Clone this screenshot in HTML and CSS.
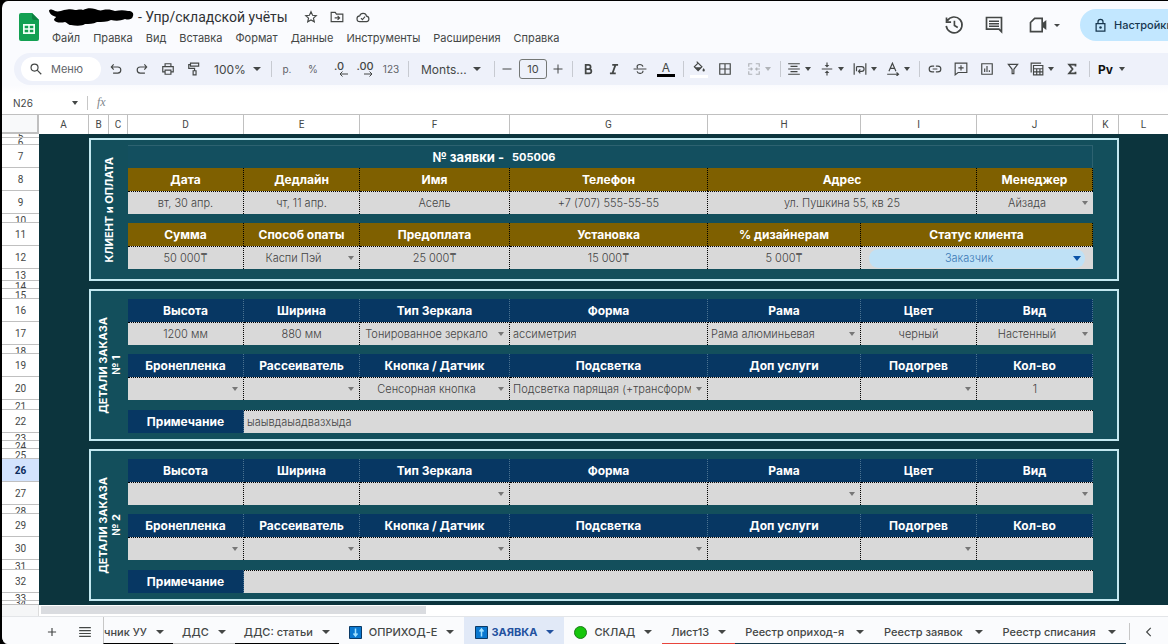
FILE: index.html
```html
<!DOCTYPE html>
<html lang="ru">
<head>
<meta charset="utf-8">
<title>Упр/складской учёты</title>
<link rel="stylesheet" href="styles.css">
</head>
<body>
<div class="app">
  <header class="top">
    <svg class="logo" viewBox="0 0 20 28"><path d="M2 0h11l7 7v19a2 2 0 0 1-2 2H2a2 2 0 0 1-2-2V2a2 2 0 0 1 2-2z" fill="#13a052"/><path d="M13 0l7 7h-5a2 2 0 0 1-2-2z" fill="#0c8040"/><path d="M4 11h12v10H4zM5.700 12.700v2.500h3.500v-2.500zM10.800 12.700v2.500h3.500v-2.500zM5.700 16.800v2.500h3.500v-2.500zM10.800 16.800v2.500h3.500v-2.500z" fill="#f2fff6" fill-rule="evenodd"/></svg>
    <div class="heading">
      <div class="title-row">
        <svg class="scribble" viewBox="0 0 86 18"><path d="M1 3c0-2 3-2 6 0 3 1 6 0 9-1 5-1 8-1 11 0 3 0 5-1 8 0 4-2 8-2 12-1 3 1 5 2 8 1 5-1 9 0 12 1 5-1 9-1 13 0 4 0 6 2 5 5-1 4-5 4-8 3-5 2-9 2-14 1-4 2-9 2-14 2-4 2-8 2-12 2-2 2-9 2-14 1-3 0-3-2-6-3-4 1-9 1-11-2 0-2 2-2 2-3-2-1-6-2-7-6z" fill="#000"/></svg>
        <h1 class="title">- Упр/складской учёты</h1>
        <button class="mini" aria-label="Пометить"><svg viewBox="0 0 24 24"><path d="M12 3l2.700 6 6.300.6-4.800 4.300 1.500 6.300L12 17l-5.700 3.200 1.500-6.300L3 9.600 9.300 9z" class="ln"/></svg></button>
        <button class="mini" aria-label="Переместить"><svg viewBox="0 0 24 24"><path d="M2 4h7l2 3h11v13H2zM8 13.500h8M13 10l3.500 3.500L13 17" class="ln"/></svg></button>
        <button class="mini" aria-label="Статус документа"><svg viewBox="0 0 24 24"><path d="M7 20a5 5 0 0 1-.6-10A6 6 0 0 1 18 10.500 4.800 4.800 0 0 1 18 20zM8.500 14l2.500 2.500 4.500-5" class="ln"/></svg></button>
      </div>
      <nav class="menu">
        <button>Файл</button><button>Правка</button><button>Вид</button><button>Вставка</button><button>Формат</button><button>Данные</button><button>Инструменты</button><button>Расширения</button><button>Справка</button>
      </nav>
    </div>
    <div class="actions">
      <button class="act" aria-label="История"><svg viewBox="0 0 24 24"><path d="M4 7a9.500 9.500 0 1 1-1.300 6M3 3v5.500h5.500M12.500 7v5.500l4 2.500" class="ln"/></svg></button>
      <button class="act" aria-label="Комментарии"><svg viewBox="0 0 24 24"><path d="M3 3h18v17l-3-3H3zM6 7.500h12M6 10.500h12M6 13.500h12" class="ln"/></svg></button>
      <button class="act call" aria-label="Видеовстреча"><svg viewBox="0 0 24 24"><path d="M8 4h9v16H3V9z" class="ln"/><path d="M17 10l5-4v12l-5-4z"/></svg><i class="caret"></i></button>
      <button class="share"><svg viewBox="0 0 24 24"><path d="M5 9h14v12H5zM8 9V6a4 4 0 0 1 8 0v3" class="ln"/><circle cx="12" cy="15" r="2"/></svg>Настройки доступа</button>
    </div>
  </header>

  <div class="toolbar">
    <label class="search"><svg viewBox="0 0 24 24"><circle cx="9.500" cy="9.500" r="6" class="ln"/><path d="M14 14l7 7" class="ln"/></svg><input type="text" placeholder="Меню" aria-label="Меню"></label>
    <button class="tb" aria-label="Отменить"><svg viewBox="0 0 24 24"><path d="M8 4L4 8.500 8 13M4.500 8.500H15a5 5 0 0 1 0 10.500H7" class="ln"/></svg></button>
    <button class="tb" aria-label="Повторить"><svg viewBox="0 0 24 24"><path d="M16 4l4 4.500L16 13M19.500 8.500H9A5 5 0 0 0 9 19h8" class="ln"/></svg></button>
    <button class="tb" aria-label="Печать"><svg viewBox="0 0 24 24"><path d="M7 8V3h10v5M7 17H3V8h18v9h-4M7 14h10v7H7z" class="ln"/></svg></button>
    <button class="tb" aria-label="Копировать форматирование"><svg viewBox="0 0 24 24"><path d="M6 2h14v5H6zM6 4.500H3V11h10v4M10.500 15h5v7h-5z" class="ln"/></svg></button>
    <button class="pick zoom">100%<i class="caret"></i></button>
    <i class="sep"></i>
    <button class="tb txt">р.</button>
    <button class="tb txt">%</button>
    <button class="tb dec">.0<svg viewBox="0 0 10 6"><path d="M10 3H2M4.500.5L2 3l2.500 2.500" class="ln1"/></svg></button>
    <button class="tb dec">.00<svg viewBox="0 0 10 6"><path d="M0 3h8M5.500.5L8 3 5.500 5.500" class="ln1"/></svg></button>
    <button class="tb num">123</button>
    <i class="sep"></i>
    <button class="pick font">Monts...<i class="caret"></i></button>
    <i class="sep"></i>
    <button class="step" aria-label="Меньше"><svg viewBox="0 0 24 24"><path d="M3 12h18" class="ln"/></svg></button>
    <input class="size" type="text" value="10" aria-label="Размер шрифта">
    <button class="step" aria-label="Больше"><svg viewBox="0 0 24 24"><path d="M3 12h18M12 3v18" class="ln"/></svg></button>
    <i class="sep"></i>
    <button class="tb" aria-label="Полужирный"><svg viewBox="0 0 24 24"><path d="M8 5h5a3.400 3.400 0 0 1 0 7H8zM8 12h6a3.600 3.600 0 0 1 0 7.500H8z" class="ln bold"/></svg></button>
    <button class="tb" aria-label="Курсив"><svg viewBox="0 0 24 24"><path d="M9 5h10M5 19.500h10M14.500 5l-5 14" class="ln bold"/></svg></button>
    <button class="tb" aria-label="Зачёркнутый"><svg viewBox="0 0 24 24"><path d="M1 12h22M17 8c-1-5-10-5-10 0 0 1.500.5 2 1 2.500M7 16c1 5 11 4.500 10-1" class="ln"/></svg></button>
    <button class="tb color">A<i class="bar"></i></button>
    <i class="sep"></i>
    <button class="tb fill" aria-label="Цвет заливки"><svg viewBox="0 0 24 24"><path d="M8 1l9 9-6.500 6.500L4 10l6-6" class="ln"/><path d="M4.500 10.500h12l-6 6zM20 12c-1 1.500-2 3-2 4a2 2 0 0 0 4 0c0-1-1-2.500-2-4z"/></svg><i class="bar"></i></button>
    <button class="tb" aria-label="Границы"><svg viewBox="0 0 24 24"><path d="M3 3h18v18H3zM3 12h18M12 3v18" class="ln"/></svg></button>
    <button class="pick merge" aria-label="Объединить" disabled><svg viewBox="0 0 24 24"><path d="M9 3H3v5M15 3h6v5M9 21H3v-5M15 21h6v-5M2 12h7M6.500 9.500L9 12l-2.500 2.500M22 12h-7M17.500 9.500L15 12l2.500 2.500" class="ln"/></svg><i class="caret"></i></button>
    <i class="sep"></i>
    <button class="pick" aria-label="По горизонтали"><svg viewBox="0 0 24 24"><path d="M2 3h20M6 7.500h12M2 12h20M6 16.500h12M2 21h20" class="ln"/></svg><i class="caret"></i></button>
    <button class="pick" aria-label="По вертикали"><svg viewBox="0 0 24 24"><path d="M3 12h18M12 1v6M12 23v-6" class="ln"/><path d="M8 5h8l-4 4.500zM8 19h8l-4-4.500z"/></svg><i class="caret"></i></button>
    <button class="pick" aria-label="Перенос"><svg viewBox="0 0 24 24"><path d="M2 2v20M22 2v20M6 8h9a3.500 3.500 0 0 1 0 8h-5M12.500 12.500L9.500 16l3 3.500M6 8v8" class="ln"/></svg><i class="caret"></i></button>
    <button class="pick" aria-label="Поворот"><svg viewBox="0 0 24 24"><path d="M5 16l6-14 6 14M7 11h8M2 21h19M18 18l3.500 3-3.500 3" class="ln"/></svg><i class="caret"></i></button>
    <i class="sep"></i>
    <button class="tb" aria-label="Ссылка"><svg viewBox="0 0 24 24"><path d="M10.500 7H7a5 5 0 0 0 0 10h3.500M13.500 7H17a5 5 0 0 1 0 10h-3.500M8 12h8" class="ln"/></svg></button>
    <button class="tb" aria-label="Комментарий"><svg viewBox="0 0 24 24"><path d="M2 2h20v16H7l-5 4zM7.500 10h9M12 5.500v9" class="ln"/></svg></button>
    <button class="tb" aria-label="Диаграмма"><svg viewBox="0 0 24 24"><path d="M3 3h18v18H3zM8 17v-6M12 17V7M16 17v-3" class="ln"/></svg></button>
    <button class="tb" aria-label="Фильтр"><svg viewBox="0 0 24 24"><path d="M4 4h16l-6.500 8.500V20h-3v-7.500z" class="ln"/></svg></button>
    <button class="pick" aria-label="Таблица"><svg viewBox="0 0 24 24"><path d="M6 6h16v16H6zM6 11.500h16M6 17h16M11.500 11.500V22M17 11.500V22M2 18V2h17" class="ln"/></svg><i class="caret"></i></button>
    <button class="tb" aria-label="Функции"><svg viewBox="0 0 24 24"><path d="M18 7.500V4.500H7l6 7.500-6 7.500h11v-3" class="ln bold"/></svg></button>
    <i class="sep"></i>
    <button class="pick lang">Pv<i class="caret"></i></button>
  </div>

  <div class="formula">
    <button class="name">N26<i class="caret"></i></button>
    <i class="rule"></i>
    <span class="fx">fx</span>
    <input class="expr" type="text" aria-label="Формула">
  </div>

  <div class="sheet">
  <table class="grid">
    <colgroup><col class="c-n"><col class="c-a"><col class="c-b"><col class="c-c"><col class="c-m"><col class="c-m"><col class="c-f"><col class="c-g"><col class="c-h"><col class="c-m"><col class="c-m"><col class="c-k"><col class="c-l"></colgroup>
    <thead>
      <tr><td class="corner"></td><th>A</th><th>B</th><th>C</th><th>D</th><th>E</th><th>F</th><th>G</th><th>H</th><th>I</th><th>J</th><th>K</th><th class="l">L</th></tr>
    </thead>
    <tbody>
      <tr class="h4"><th class="n"><span>5</span></th><td rowspan="30"></td><td colspan="10"></td><td rowspan="30"></td></tr>
      <tr class="h7"><th class="n"><span>6</span></th><th class="side" colspan="2" rowspan="8"><span>КЛИЕНТ и ОПЛАТА</span></th><td class="gap first" colspan="7"></td><td class="edge" rowspan="8"></td></tr>
      <tr class="h23"><th class="n"><span>7</span></th><td class="order" colspan="3">№ заявки -</td><td class="code" colspan="4">505006</td></tr>
      <tr class="h23 gold"><th class="n"><span>8</span></th><th>Дата</th><th>Дедлайн</th><th>Имя</th><th>Телефон</th><th colspan="2">Адрес</th><th id="mgr">Менеджер</th></tr>
      <tr class="h23 vals"><th class="n"><span>9</span></th><td>вт, 30 апр.</td><td>чт, 11 апр.</td><td>Асель</td><td>+7 (707) 555-55-55</td><td colspan="2">ул. Пушкина 55, кв 25</td><td class="dd"><select aria-labelledby="mgr"><option>Айзада</option></select></td></tr>
      <tr class="h9"><th class="n"><span>10</span></th><td class="gap" colspan="7"></td></tr>
      <tr class="h23 gold"><th class="n"><span>11</span></th><th>Сумма</th><th id="pay">Способ опаты</th><th>Предоплата</th><th>Установка</th><th>% дизайнерам</th><th id="status" colspan="2">Статус клиента</th></tr>
      <tr class="h23 vals"><th class="n"><span>12</span></th><td>50 000₸</td><td class="dd"><select aria-labelledby="pay"><option>Каспи Пэй</option></select></td><td>25 000₸</td><td>15 000₸</td><td>5 000₸</td><td class="dd chip" colspan="2"><select aria-labelledby="status"><option>Заказчик</option></select></td></tr>
      <tr class="h12"><th class="n"><span>13</span></th><td class="gap last" colspan="7"></td></tr>
      <tr class="h8"><th class="n"><span>14</span></th><td colspan="10"></td></tr>

      <tr class="h10"><th class="n"><span>15</span></th><th class="side" colspan="2" rowspan="9"><span>ДЕТАЛИ ЗАКАЗА<br>№ 1</span></th><td class="gap first" colspan="7"></td><td class="edge" rowspan="9"></td></tr>
      <tr class="h23 blue"><th class="n"><span>16</span></th><th>Высота</th><th>Ширина</th><th id="type1">Тип Зеркала</th><th>Форма</th><th id="frame1">Рама</th><th>Цвет</th><th id="view1">Вид</th></tr>
      <tr class="h23 vals"><th class="n"><span>17</span></th><td>1200 мм</td><td>880 мм</td><td class="dd"><select aria-labelledby="type1"><option>Тонированное зеркало</option></select></td><td class="left">ассиметрия</td><td class="dd left"><select aria-labelledby="frame1"><option>Рама алюминьевая</option></select></td><td>черный</td><td class="dd"><select aria-labelledby="view1"><option>Настенный</option></select></td></tr>
      <tr class="h9"><th class="n"><span>18</span></th><td class="gap" colspan="7"></td></tr>
      <tr class="h23 blue"><th class="n"><span>19</span></th><th id="film1">Бронепленка</th><th id="diff1">Рассеиватель</th><th id="btn1">Кнопка / Датчик</th><th id="light1">Подсветка</th><th>Доп услуги</th><th id="heat1">Подогрев</th><th>Кол-во</th></tr>
      <tr class="h23 vals"><th class="n"><span>20</span></th><td class="dd"><select aria-labelledby="film1"><option></option></select></td><td class="dd"><select aria-labelledby="diff1"><option></option></select></td><td class="dd"><select aria-labelledby="btn1"><option>Сенсорная кнопка</option></select></td><td class="dd left"><select aria-labelledby="light1"><option>Подсветка парящая (+трансформатор)</option></select></td><td></td><td class="dd"><select aria-labelledby="heat1"><option></option></select></td><td>1</td></tr>
      <tr class="h10"><th class="n"><span>21</span></th><td class="gap" colspan="7"></td></tr>
      <tr class="h23 blue vals"><th class="n"><span>22</span></th><th>Примечание</th><td class="left" colspan="6">ыаывдаыадвазхыда</td></tr>
      <tr class="h8"><th class="n"><span>23</span></th><td class="gap last" colspan="7"></td></tr>
      <tr class="h8"><th class="n"><span>24</span></th><td colspan="10"></td></tr>

      <tr class="h10"><th class="n"><span>25</span></th><th class="side" colspan="2" rowspan="9"><span>ДЕТАЛИ ЗАКАЗА<br>№ 2</span></th><td class="gap first" colspan="7"></td><td class="edge" rowspan="9"></td></tr>
      <tr class="h23 blue"><th class="n current"><span>26</span></th><th>Высота</th><th>Ширина</th><th id="type2">Тип Зеркала</th><th>Форма</th><th id="frame2">Рама</th><th>Цвет</th><th id="view2">Вид</th></tr>
      <tr class="h23 vals"><th class="n"><span>27</span></th><td></td><td></td><td class="dd"><select aria-labelledby="type2"><option></option></select></td><td></td><td class="dd"><select aria-labelledby="frame2"><option></option></select></td><td></td><td class="dd"><select aria-labelledby="view2"><option></option></select></td></tr>
      <tr class="h9"><th class="n"><span>28</span></th><td class="gap" colspan="7"></td></tr>
      <tr class="h23 blue"><th class="n"><span>29</span></th><th id="film2">Бронепленка</th><th id="diff2">Рассеиватель</th><th id="btn2">Кнопка / Датчик</th><th id="light2">Подсветка</th><th>Доп услуги</th><th id="heat2">Подогрев</th><th>Кол-во</th></tr>
      <tr class="h23 vals"><th class="n"><span>30</span></th><td class="dd"><select aria-labelledby="film2"><option></option></select></td><td class="dd"><select aria-labelledby="diff2"><option></option></select></td><td class="dd"><select aria-labelledby="btn2"><option></option></select></td><td class="dd"><select aria-labelledby="light2"><option></option></select></td><td></td><td class="dd"><select aria-labelledby="heat2"><option></option></select></td><td></td></tr>
      <tr class="h10"><th class="n"><span>31</span></th><td class="gap" colspan="7"></td></tr>
      <tr class="h23 blue vals"><th class="n"><span>32</span></th><th>Примечание</th><td class="left" colspan="6"></td></tr>
      <tr class="h8"><th class="n"><span>33</span></th><td class="gap last" colspan="7"></td></tr>
      <tr class="h4"><th class="n"><span>34</span></th><td colspan="10"></td></tr>
    </tbody>
  </table>
  </div>
  <div class="scroll"><i class="stub"></i><i class="thumb"></i></div>

  <footer class="tabs">
    <button class="tool" aria-label="Добавить лист"><svg viewBox="0 0 24 24"><path d="M5 12h14M12 5v14" class="ln"/></svg></button>
    <button class="tool" aria-label="Все листы"><svg viewBox="0 0 24 24"><path d="M2 4.500h20M2 9.500h20M2 14.500h20M2 19.500h20" class="ln"/></svg></button>
    <div class="strip">
      <button class="tab cut u-black"><span>чник УУ</span><i class="caret"></i></button>
      <button class="tab u-grey">ДДС<i class="caret"></i></button>
      <button class="tab u-black">ДДС: статьи<i class="caret"></i></button>
      <button class="tab icon"><svg viewBox="0 0 13 13"><path d="M.5.5h12v12H.5z" fill="#0a78d0" stroke="#0b3a66"/><path d="M6.500 2.500v7M4.500 7.500l2 2.500 2-2.500" fill="none" stroke="#9fe0ff" stroke-width="1.500"/></svg>ОПРИХОД-Е<i class="caret"></i></button>
      <button class="tab active"><svg viewBox="0 0 13 13"><path d="M.5.5h12v12H.5z" fill="#0a78d0" stroke="#0b3a66"/><path d="M6.500 10.500v-7M4.500 5.500l2-2.500 2 2.500" fill="none" stroke="#9fe0ff" stroke-width="1.500"/></svg>ЗАЯВКА<i class="caret"></i></button>
      <button class="tab icon"><svg viewBox="0 0 13 13"><circle cx="6.500" cy="6.500" r="6" fill="#16c60c" stroke="#1d7a1a"/></svg>СКЛАД<i class="caret"></i></button>
      <button class="tab u-red">Лист13<i class="caret"></i></button>
      <button class="tab u-navy">Реестр оприход-я<i class="caret"></i></button>
      <button class="tab u-navy">Реестр заявок<i class="caret"></i></button>
      <button class="tab u-navy">Реестр списания<i class="caret"></i></button>
    </div>
    <button class="prev" aria-label="Назад"><svg viewBox="0 0 24 24"><path d="M15 5l-7 7 7 7" class="ln"/></svg></button>
  </footer>
</div>
</body>
</html>
```
FILE: styles.css
```css
* { box-sizing: border-box; }
body {
  margin: 0;
  background: #000;
  font-family: Inter, "Liberation Sans", sans-serif;
  font-size: 11px;
  color: #444746;
}
button, input, select {
  margin: 0;
  padding: 0;
  border: 0;
  background: none;
  font: inherit;
  color: inherit;
  white-space: nowrap;
}
svg { display: block; flex: none; fill: currentColor; }
.ln { fill: none; stroke: currentColor; stroke-width: 2; }
.ln1 { fill: none; stroke: currentColor; stroke-width: 1; }
.bold { stroke-width: 3; }
.caret {
  flex: none;
  border: 4px solid transparent;
  border-top-color: currentColor;
  border-bottom-width: 0;
}
.app {
  display: flex;
  flex-direction: column;
  min-height: 100vh;
  border: solid #000;
  border-width: 1px 0 0 2px;
  border-radius: 8px 0 0 8px;
  background: #fafbfe;
  overflow: hidden;
}

/* title bar */
.top { display: flex; height: 52px; padding-left: 17px; }
.logo { width: 20px; height: 28px; margin-top: 12px; }
.heading { flex: 1; min-width: 0; padding: 5px 0 0 9px; }
.title-row { display: flex; align-items: center; height: 22px; gap: 4px; }
.scribble { width: 86px; height: 18px; }
.title {
  margin: 0 8px 0 0;
  font: 400 14px/20px Roboto, sans-serif;
  color: #303134;
  white-space: nowrap;
}
.mini { width: 22px; display: flex; justify-content: center; }
.mini svg { width: 14px; height: 14px; }
.menu { display: flex; gap: 13px; padding-left: 4px; line-height: 20px; }
.actions { display: flex; align-items: center; height: 48px; color: #444746; }
.act { width: 40px; display: flex; justify-content: center; align-items: center; gap: 6px; }
.act svg { width: 20px; height: 20px; }
.call { width: 60px; margin-right: 6px; }
.call .caret { border-width: 3px 3px 0; }
.share {
  display: flex;
  align-items: center;
  gap: 6px;
  width: 88px;
  height: 32px;
  padding-left: 13px;
  border-radius: 16px 0 0 16px;
  background: #c2e7ff;
  color: #17374f;
  font-weight: 500;
  overflow: hidden;
}
.share svg { width: 15px; height: 15px; }

/* toolbar */
.toolbar {
  display: flex;
  align-items: center;
  height: 32px;
  margin-left: 12px;
  padding-left: 7px;
  border-radius: 16px 0 0 16px;
  background: #eef1fa;
  overflow: hidden;
}
.search {
  display: flex;
  align-items: center;
  flex: none;
  gap: 8px;
  width: 80px;
  height: 24px;
  margin-right: 2px;
  padding-left: 8px;
  border-radius: 12px;
  background: #fff;
}
.search svg { width: 14px; height: 14px; }
.search input { width: 44px; outline: 0; }
.search input::placeholder { color: #5f6368; opacity: 1; }
.tb, .step, .pick {
  display: flex;
  align-items: center;
  justify-content: center;
  flex: none;
  width: 26px;
  height: 24px;
}
.tb svg, .pick svg { width: 14px; height: 14px; }
.step { width: 20px; }
.step svg { width: 12px; height: 12px; }
.pick { width: 33px; gap: 4px; padding: 0 4px; justify-content: flex-start; }
.pick .caret { border-width: 4px 3px 0; }
.zoom { width: 60px; padding: 0 7px; gap: 7px; font-size: 12px; }
.zoom .caret, .font .caret { border-width: 4px 4px 0; }
.font { width: 79px; padding: 0 9px 0 10px; justify-content: space-between; font-size: 12px; }
.merge { width: 38px; padding-left: 9px; color: #b0b3b8; }
.lang { width: 38px; padding-left: 6px; gap: 6px; font-weight: 700; font-size: 12px; color: #111; }
.lang .caret { color: #444746; }
.txt, .num { font-size: 10px; color: #5f6368; }
.tb.dec { flex-direction: column; font-size: 11px; line-height: 10px; font-weight: 500; }
.tb.dec svg { width: 10px; height: 6px; margin-left: 8px; }
.color, .fill { flex-direction: column; font-size: 12px; line-height: 13px; }
.bar { width: 18px; height: 3px; background: #000; }
.fill .bar { background: #fff; }
.size {
  width: 28px;
  height: 20px;
  margin: 0 1px 0 2px;
  border: 1px solid #747775;
  border-radius: 3px;
  text-align: center;
}
.sep { flex: none; width: 1px; height: 16px; margin: 0 2px 0 4px; background: #c7cad1; }

/* formula bar */
.formula {
  display: flex;
  align-items: center;
  height: 29px;
  padding: 6px 0 0 11px;
  background: linear-gradient(#fafbfe, #fff 8px);
}
.name { display: flex; justify-content: space-between; align-items: center; width: 65px; font-size: 10px; }
.name .caret { border-width: 4px 3px 0; }
.rule { width: 1px; height: 14px; margin: 0 9px; background: #c7c7c7; }
.fx { font: italic 12px "Liberation Serif", serif; color: #80868b; }
.expr { flex: 1; margin-left: 8px; outline: 0; }

/* spreadsheet */
.sheet { overflow: hidden; background: #0c343d; }
.grid { width: 100%; table-layout: fixed; border-spacing: 0; }
.c-n { width: 37px; }
.c-a { width: 50px; }
.c-b { width: 20px; }
.c-c { width: 19px; }
.c-m { width: 116px; }
.c-f { width: 150px; }
.c-g { width: 198px; }
.c-h { width: 153px; }
.c-k { width: 26px; }
.grid th, .grid td { padding: 0; overflow: hidden; white-space: nowrap; }
.grid thead th, .corner {
  height: 20px;
  border: solid #c0c0c0;
  border-width: 1px 1px 0 0;
  background: #fff;
  font: 400 10px/18px Roboto, sans-serif;
}
.grid thead .corner { border-width: 1px 2px 2px 0; border-color: #c0c0c0; background: #f8f9fa; }
.grid thead .l { border-right: 0; }
.n { background: #fff; font: 400 10px/14px Roboto, sans-serif; color: #444746; }
.n span { display: block; overflow: hidden; border-bottom: 1px solid #c0c0c0; }
.current { background: #d3e3fd; color: #0b2a5b; font-weight: 700; }
.h4, .h4 .n span { height: 4px; line-height: 6px; }
.h7, .h7 .n span { height: 7px; line-height: 9px; }
.h8, .h8 .n span { height: 8px; line-height: 11px; }
.h9, .h9 .n span { height: 9px; }
.h10, .h10 .n span { height: 10px; }
.h12, .h12 .n span { height: 12px; }
.h23 { height: 23px; }
.h23 .n span { height: 23px; line-height: 24px; }

.grid .side {
  border: 2px solid #c3e8f0;
  border-right: 0;
  background: #134f5c;
  color: #fff;
  font-size: 11px;
  font-weight: 700;
}
.side span {
  display: inline-block;
  line-height: 13px;
  writing-mode: vertical-rl;
  text-orientation: sideways;
  transform: rotate(180deg);
  vertical-align: middle;
}
.gap { background: #134f5c; }
.grid .first { border-top: 2px solid #c3e8f0; }
.grid .last { border-bottom: 2px solid #c3e8f0; }
.grid .edge { border: 2px solid #c3e8f0; border-left: 0; background: #134f5c; }
.order, .code {
  border-top: 1px solid #2d6270;
  background: #134f5f;
  color: #fff;
  font-weight: 700;
  font-size: 13px;
  line-height: 16px;
}
.order { text-align: right; }
.grid .order { padding-right: 6px; }
.code { font-size: 11px; }
.grid .code { padding-left: 2px; border-right: 1px solid #2d6270; }
.gold th:not(.n), .blue th:not(.n) {
  border-right: 1px dotted #000;
  background: #7f6000;
  color: #fff;
  font-size: 12px;
  line-height: 16px;
  font-weight: 700;
}
.blue th:not(.n) { border-right-color: #4b7391; background: #073763; }
.vals td {
  border: 1px dotted #000;
  border-width: 1px 1px 0 0;
  background: #d9d9d9;
  color: #434343;
  font-size: 11px;
  line-height: 14px;
  font-weight: 300;
  text-align: center;
}
.vals td:last-child { border-right: 0; }
.vals .left { text-align: left; }
.grid .vals .left { padding-left: 3px; }
.dd { position: relative; }
.dd select {
  appearance: none;
  display: block;
  width: 100%;
  height: 20px;
  padding-right: 16px;
  text-align: center;
  text-align-last: center;
  overflow: hidden;
  outline: 0;
}
.grid .vals .dd.left { padding-right: 16px; }
.dd.left select { padding: 0; text-align: left; text-align-last: left; }
.dd::after {
  content: "";
  position: absolute;
  top: 9px;
  right: 5px;
  border: solid transparent;
  border-width: 4px 3px 0;
  border-top-color: #777;
  pointer-events: none;
}
.grid .vals .chip { padding: 1px 8px; }
.chip select { height: 19px; border-radius: 10px; background: #bfe1f6; color: #3a78b5; }
.dd.chip::after { right: 12px; border-width: 5px 4px 0; border-top-color: #0a53a8; }

.scroll { display: flex; height: 12px; background: #fff; border-bottom: 1px solid #e3e5e8; }
.stub { width: 37px; background: #f5f6f7; border-right: 1px solid #ddd; }
.thumb { width: 33%; height: 8px; margin: 1px 0 0 2px; background: #dadce0; }

/* sheet tabs */
.tabs { display: flex; flex: 1; min-height: 27px; padding-left: 33px; background: #fafbfd; }
.tool { display: flex; justify-content: center; align-items: center; flex: none; width: 33px; padding-top: 3px; }
.tool svg { width: 14px; height: 14px; }
.strip { display: flex; flex: 1; min-width: 0; margin-left: 2px; overflow: hidden; }
.tab {
  display: flex;
  align-items: center;
  flex: none;
  gap: 9px;
  padding: 4px 9px 0;
  border-bottom: 1px solid transparent;
  font-weight: 500;
}
.tab .caret { border-width: 4px 4px 0; }
.tab svg { width: 13px; height: 13px; }
.icon svg { margin-right: -2px; }
.icon { padding: 4px 10px 0; }
.cut { padding-left: 0; border-left: 1px solid #c7c7c7; }
.active { padding: 4px 10px 0 11px; background: #e1e9f7; color: #23529f; font-weight: 700; }
.active svg { margin-right: -6px; }
.u-black { border-bottom-color: #000; }
.u-grey { border-bottom-color: #c4c4c4; }
.u-red { border-bottom-color: #e8453c; }
.u-navy { gap: 12px; padding: 4px 10px 0; border-bottom-color: #16384a; }
.prev { display: flex; justify-content: center; align-items: center; flex: none; width: 39px; margin: 6px 0 4px; border-left: 1px solid #c7c7c7; }
.prev svg { width: 14px; height: 14px; }
```
